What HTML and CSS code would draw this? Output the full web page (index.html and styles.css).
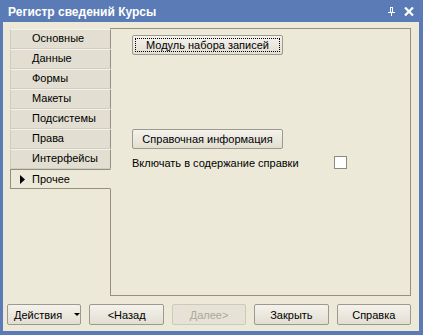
FILE: index.html
```html
<!DOCTYPE html>
<html>
<head>
<meta charset="utf-8">
<link rel="stylesheet" href="styles.css">
</head>
<body>
<div class="window">
  <div class="titlebar">
    <span class="title">Регистр сведений Курсы</span>
    <span class="tb-icons">
      <svg class="pin" width="7" height="9" viewBox="0 0 7 9"><path d="M2 0h3v1H5v4h2v1H4v3H3V6H0V5h2V1H2z M3 1v4h1V1z" fill="#fff" fill-rule="evenodd"/></svg>
      <svg class="close" width="10" height="9" viewBox="0 0 10 9"><path d="M1 0.5L9 8.5M9 0.5L1 8.5" stroke="#fff" stroke-width="2.2"/></svg>
    </span>
  </div>
  <div class="client">
    <div class="main">
      <div class="tabs">
        <div class="tab-top"></div>
        <div class="tab">Основные</div>
        <div class="tab">Данные</div>
        <div class="tab">Формы</div>
        <div class="tab">Макеты</div>
        <div class="tab">Подсистемы</div>
        <div class="tab">Права</div>
        <div class="tab">Интерфейсы</div>
        <div class="tab selected"><svg class="arrow" width="5" height="9" viewBox="0 0 5 9"><path d="M0 0L5 4.5L0 9z" fill="#000"/></svg>Прочее</div>
        <div class="tab-fill"></div>
      </div>
      <div class="panel">
        <button class="btn wide focused"><span class="focus">Модуль набора записей</span></button>
        <div class="help-block">
          <button class="btn wide">Справочная информация</button>
          <div class="check-row">
            <span class="check-label">Включать в содержание справки</span>
            <span class="checkbox"></span>
          </div>
        </div>
      </div>
    </div>
    <div class="footer">
      <button class="btn foot actions">Действия<span class="dd"></span></button>
      <button class="btn foot">&lt;Назад</button>
      <button class="btn foot disabled">Далее&gt;</button>
      <button class="btn foot">Закрыть</button>
      <button class="btn foot">Справка</button>
    </div>
  </div>
</div>
</body>
</html>
```
FILE: styles.css
```css
html, body {
  margin: 0;
  padding: 0;
}
body {
  width: 423px;
  height: 335px;
  overflow: hidden;
  font-family: "Liberation Sans", Arial, sans-serif;
  font-size: 11px;
  color: #000;
}
.window {
  width: 423px;
  height: 335px;
  box-sizing: border-box;
  background: #5a7bb5;
  padding: 0 4px 4px 3px;
  display: flex;
  flex-direction: column;
}
.titlebar {
  height: 22px;
  flex: none;
  display: flex;
  align-items: center;
  padding-left: 5px;
  padding-top: 1px;
  box-sizing: border-box;
}
.title {
  color: #fff;
  font-weight: bold;
  font-size: 12px;
  flex: 1;
}
.tb-icons {
  display: flex;
  align-items: center;
  gap: 9px;
  padding-right: 5px;
}
.pin { display: block; }
.close { display: block; }
.client {
  flex: 1;
  background: #ece9d8;
  display: flex;
  flex-direction: column;
  padding: 6px 8px 6px 4px;
}
.main {
  flex: 1;
  display: flex;
  margin-left: 3px;
}
.tabs {
  width: 101px;
  flex: none;
  display: flex;
  flex-direction: column;
}
.tab-top {
  height: 1px;
  border-right: 1px solid #948f80;
  flex: none;
}
.tab {
  height: 20px;
  box-sizing: border-box;
  background: #e2ded1;
  border-top: 1px solid #f4f2ea;
  border-bottom: 1px solid #d0ccbf;
  border-left: 1px solid #d0ccbf;
  border-right: 1px solid #948f80;
  padding-left: 21px;
  line-height: 17px;
  flex: none;
}
.tab.selected {
  background: #ece9d8;
  border: 1px solid #948f80;
  border-right: 1px solid #ece9d8;
  padding-left: 9px;
  display: flex;
  align-items: center;
}
.arrow {
  display: block;
  margin-right: 7px;
}
.tab-fill {
  flex: 1;
  border-right: 1px solid #948f80;
}
.panel {
  flex: 1;
  border: 1px solid #948f80;
  border-left: none;
  padding: 6px 0 0 21px;
  display: flex;
  flex-direction: column;
  align-items: flex-start;
}
.btn {
  font-family: inherit;
  font-size: 11px;
  color: #000;
  height: 20px;
  box-sizing: border-box;
  border: 1px solid #9d998c;
  border-radius: 2px;
  background: linear-gradient(#f4f2ec, #e2ded1);
  padding: 0;
  margin: 0;
  display: flex;
  align-items: center;
  justify-content: center;
}
.wide {
  width: 151px;
  height: 20px;
}
.focused {
  padding: 2px;
}
.focus {
  flex: 1;
  align-self: stretch;
  border: 1px dotted #000;
  display: flex;
  align-items: center;
  justify-content: center;
}
.help-block {
  margin-top: 74px;
}
.check-row {
  display: flex;
  align-items: center;
  margin-top: 7px;
}
.check-label {
  width: 202px;
}
.checkbox {
  width: 13px;
  height: 13px;
  box-sizing: border-box;
  border: 1px solid #8c8a80;
  background: #fff;
}
.footer {
  display: flex;
  gap: 8px;
  margin-top: 8px;
  flex: none;
}
.foot {
  width: 75px;
  height: 21px;
}
.actions {
  justify-content: flex-start;
  padding-left: 6px;
  gap: 12px;
}
.dd {
  width: 0;
  height: 0;
  border-left: 3px solid transparent;
  border-right: 3px solid transparent;
  border-top: 3px solid #000;
}
.disabled {
  color: #aca899;
  border-color: #cdc9bc;
  background: #e6e2d6;
}
```
